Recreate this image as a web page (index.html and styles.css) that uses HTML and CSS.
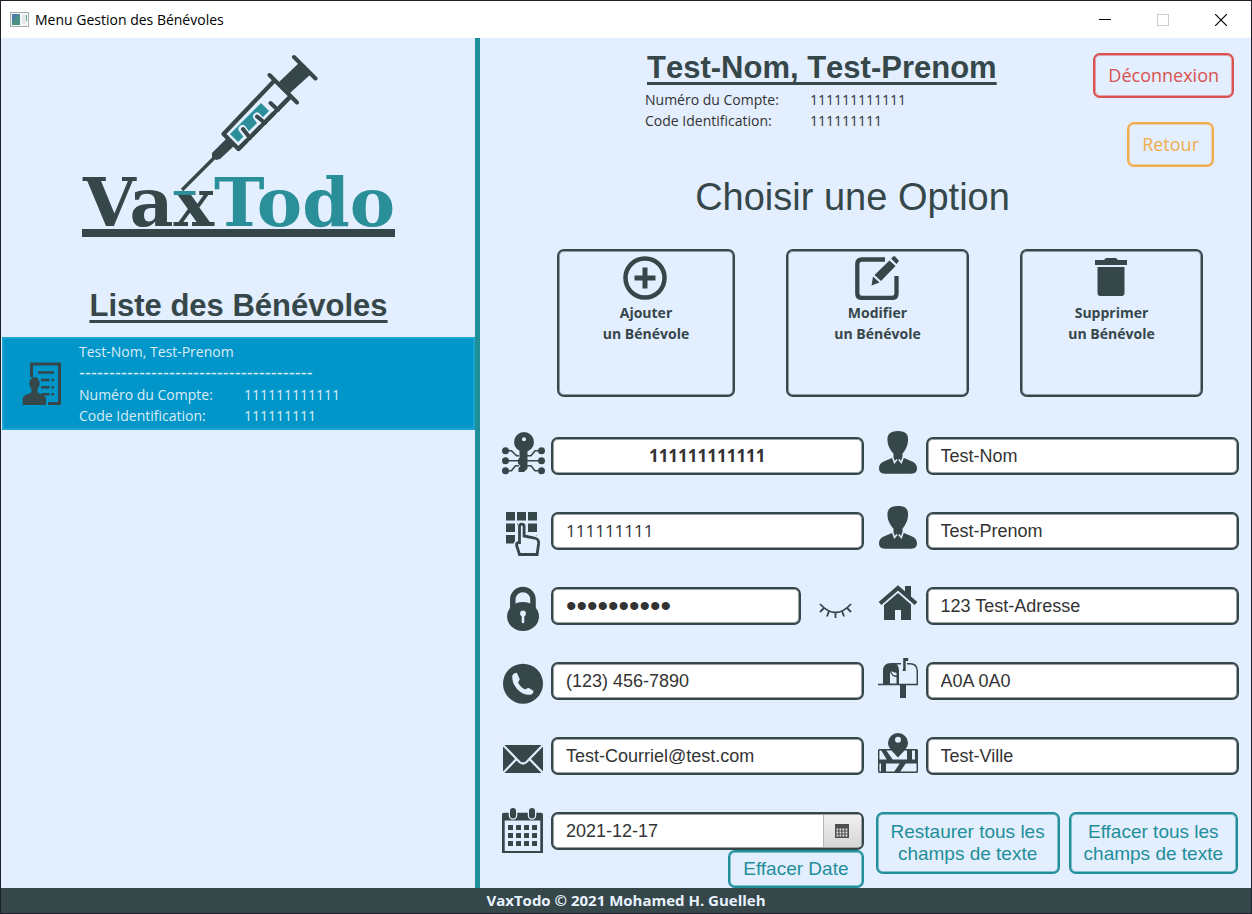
FILE: index.html
```html
<!DOCTYPE html>
<html lang="fr">
<head>
<meta charset="utf-8">
<title>Menu Gestion des Bénévoles</title>
<link rel="stylesheet" href="styles.css">
</head>
<body>
<div class="window">
  <header class="titlebar">
    <svg class="app-icon" width="19" height="16" viewBox="0 0 19 16"><rect x="0.5" y="0.5" width="18" height="14" fill="#f4f6f8" stroke="#a9adb0"/><rect x="2" y="2" width="8" height="11" fill="#4d9186"/><path d="M2 2h7L2 10z" fill="#4c7ba8"/><rect x="12" y="3" width="4" height="9" fill="#e4e8ec"/><rect x="16" y="3" width="1" height="6" fill="#5fae86"/></svg>
    <span class="window-title">Menu Gestion des Bénévoles</span>
    <div class="window-controls">
      <button type="button" aria-label="Réduire"><svg width="12" height="12" viewBox="0 0 12 12"><path d="M0 5.5h12" stroke="#000"/></svg></button>
      <button type="button" aria-label="Agrandir" disabled><svg width="12" height="12" viewBox="0 0 12 12"><rect x="0.5" y="0.5" width="11" height="11" fill="none" stroke="#ccc"/></svg></button>
      <button type="button" aria-label="Fermer"><svg width="12" height="12" viewBox="0 0 12 12"><path d="M0 0l12 12M12 0L0 12" stroke="#000" stroke-width="1.2"/></svg></button>
    </div>
  </header>

  <div class="content">
    <aside class="sidebar">
      <svg class="logo" width="313" height="194" viewBox="82 50 313 194" role="img" aria-label="VaxTodo">
        <text class="logo-text" x="83" y="226"><tspan fill="#36474a">Vax</tspan><tspan x="214" fill="#2b8f99">Todo</tspan></text>
        <rect x="174" y="191" width="21" height="4" fill="#2b8f99"/>
        <rect x="82" y="229" width="313" height="8" fill="#36474a"/>
        <path d="M216 156L182 190" stroke="#36474a" stroke-width="3.4"/>
        <path d="M226 139l8 7-14 13-4 1-4-3v-4z" fill="#36474a"/>
        <path d="M274 81L223.500 134l15 15L290 97" fill="none" stroke="#36474a" stroke-width="4.200" stroke-linejoin="round"/>
        <path d="M230 134l31-31 8 8-31 31z" fill="#2b8f99"/>
        <path d="M276 110l-5-6M263 124l-6-7.500M249 138l-6.500-9" stroke="#e3eeff" stroke-width="8" stroke-linecap="round"/>
        <path d="M278 110l-7.500-7M265 123l-8-6.500M250 138l-7-9" stroke="#36474a" stroke-width="4" stroke-linecap="round"/>
        <path d="M238.500 149L290 97M269.500 75L297 102.500M294 57l21.500 21.500" stroke="#36474a" stroke-width="4" stroke-linecap="round"/>
        <path d="M300 62l11 12-21 19-11-11z" fill="#36474a"/>
      </svg>
      <h2 class="list-title">Liste des Bénévoles</h2>
      <ul class="list">
        <li class="list-item">
          <svg class="ink" width="40" height="44" viewBox="0 0 40 44"><path d="M9.500 15V2h28v39.500H26" fill="none" stroke="#36474a" stroke-width="3"/><path d="M16 10.500h16M19 18h8.500M29.500 18h2.500M19 25.300h8.500M29.500 25.300h2.500M20 32.300h7.500M29.500 32.300h2.500" stroke="#36474a" stroke-width="2.500"/><ellipse cx="12.500" cy="21.500" rx="5.200" ry="6.500"/><path d="M9.500 25h6v5c3 3 8.500 2 8.500 7.500V43H.700v-5.500C.700 32 6.500 33 9.500 30z"/></svg>
          <div>
            <p>Test-Nom, Test-Prenom</p>
            <p class="dashes">---------------------------------------</p>
            <dl class="ids"><dt>Numéro du Compte:</dt><dd>111111111111</dd><dt>Code Identification:</dt><dd>111111111</dd></dl>
          </div>
        </li>
      </ul>
    </aside>

    <main class="main">
      <div class="top">
        <div class="user">
          <h1>Test-Nom, Test-Prenom</h1>
          <dl class="ids"><dt>Numéro du Compte:</dt><dd>111111111111</dd><dt>Code Identification:</dt><dd>111111111</dd></dl>
        </div>
        <div class="session">
          <button type="button" class="btn btn-danger">Déconnexion</button>
          <button type="button" class="btn btn-warning">Retour</button>
        </div>
      </div>

      <h2 class="prompt">Choisir une Option</h2>

      <div class="cards">
        <button type="button" class="card">
          <svg class="ink" width="46" height="46" viewBox="0 0 46 46"><circle cx="22" cy="24" r="19.500" fill="none" stroke="#36474a" stroke-width="4.500"/><path d="M19.500 13.500h5v8h8v5h-8v8h-5v-8h-8v-5h8z"/></svg>
          <span>Ajouter<br>un Bénévole</span>
        </button>
        <button type="button" class="card">
          <svg class="ink" width="46" height="46" viewBox="0 0 46 46"><path d="M30 5.500H7Q2.300 5.500 2.300 10v29.500Q2.300 44 7 44h30q4.500 0 4.500-4.500V22" fill="none" stroke="#36474a" stroke-width="4.300"/><path d="M36 4.500l3-2.500q1 0 5 5l-2.500 3z"/><path d="M34.500 6.500l6 5.500L26 27l-6.500-6z"/><path d="M18 22.500l6.500 6-8 3z"/></svg>
          <span>Modifier<br>un Bénévole</span>
        </button>
        <button type="button" class="card">
          <svg class="ink" width="46" height="46" viewBox="0 0 46 46"><path d="M6 6h9l2-2h10l2 2h9v5H6zM8.500 13h27v26q0 3-3 3h-21q-3 0-3-3z"/></svg>
          <span>Supprimer<br>un Bénévole</span>
        </button>
      </div>

      <form class="form">
        <div class="column">
          <div class="row">
            <label for="account" aria-label="Numéro du compte"><svg class="ink" width="43" height="50" viewBox="0 0 43 50"><g fill="none" stroke="#36474a" stroke-width="1.600"><path d="M3 19.700h6.500l5 5H17M3 29.700h14M3 39.700h6.500l4-5H17M39.500 19.700H33l-4 5h-4M39.500 29.700H25M39.500 39.700H33l-4-5h-4"/></g><circle cx="3.500" cy="19.700" r="3.500"/><circle cx="3.500" cy="29.700" r="3.500"/><circle cx="3.500" cy="39.700" r="3.500"/><circle cx="39.500" cy="19.700" r="3.500"/><circle cx="39.500" cy="29.700" r="3.500"/><circle cx="39.500" cy="39.700" r="3.500"/><path d="M17.500 19h8v18.500L22 41h-5.500v-4l2-2-2.500-2.500v-4l1.500-1.500z"/><circle cx="22" cy="11" r="10"/><circle cx="22" cy="8.300" r="2" fill="#e3eeff"/></svg></label>
            <input id="account" class="field digits strong" type="text" value="111111111111">
          </div>
          <div class="row">
            <label for="code" aria-label="Code identification"><svg class="ink" width="43" height="50" viewBox="0 0 43 50"><path d="M4 6h9v8.500H4zM15 6h9v8.500h-9zM26 6h9v8.500h-9zM4 17.500h9V26H4zM15 17.500h9V26h-9zM26 17.500h9V26h-9zM4 29h9v8.500H4zM26 29h9v5h-9z"/><path d="M17 36V20.500a3 3 0 0 1 6 0V29l10 2q4.500 1.500 4 6l-1.500 11.500H17L13.500 39q0-3 3.500-3z" fill="#e3eeff" stroke="#e3eeff" stroke-width="4"/><path d="M17.500 38V20.500a2.300 2.300 0 0 1 4.600 0V30l10.500 2q4.500 1 4 5.500l-1.500 11H17.500L14.500 39q0-2.500 3-2.500" fill="#e3eeff" stroke="#36474a" stroke-width="2.800"/></svg></label>
            <input id="code" class="field digits" type="text" value="111111111">
          </div>
          <div class="row">
            <label for="password" aria-label="Mot de passe"><svg class="ink" width="43" height="50" viewBox="0 0 43 50"><path d="M10.800 30V18.500a10 10 0 0 1 20.200 0V30" fill="none" stroke="#36474a" stroke-width="5.500"/><ellipse cx="21" cy="35.500" rx="16" ry="14.500"/><circle cx="21" cy="32.500" r="2.900" fill="#e3eeff"/><path d="M21 33v8" stroke="#e3eeff" stroke-width="2.600" stroke-linecap="round"/></svg></label>
            <input id="password" class="field password" type="password" value="motdepasse">
            <button type="button" class="reveal" aria-label="Afficher le mot de passe"><svg width="34" height="24" viewBox="0 0 34 24"><path d="M1 10Q16.500 27 32 10M5 14l-4 4M10 17l-2 5.500M16.500 18.500V24M23 17l2 5.500M28 14l4 4" fill="none" stroke="#36474a" stroke-width="1.800"/></svg></button>
          </div>
          <div class="row">
            <label for="phone" aria-label="Téléphone"><svg class="ink" width="43" height="50" viewBox="0 0 43 50"><circle cx="21" cy="27.700" r="20"/><path d="M10.300 19.500q1-2.500 4.500-2.800l3 6.500-1.700 3.300q2.500 5 7 7l3.300-1.800 5 3q.5 2.500-2 3.800Q22 40 15.500 33.500 9.500 26.500 10.300 19.500z" fill="#e3eeff"/></svg></label>
            <input id="phone" class="field" type="text" value="(123) 456-7890">
          </div>
          <div class="row">
            <label for="email" aria-label="Courriel"><svg class="ink" width="43" height="50" viewBox="0 0 43 50"><path d="M1 14h40v28H1z"/><path d="M0 13l17.500 18q3.500 3 7 0L42 13M0 43l14.500-15M42 43L27.500 28" fill="none" stroke="#e3eeff" stroke-width="2.200"/></svg></label>
            <input id="email" class="field" type="text" value="Test-Courriel@test.com">
          </div>
          <div class="row row-date">
            <label for="date" aria-label="Date"><svg class="ink" width="43" height="50" viewBox="0 0 43 50"><path d="M2 6.700h37q2 0 2 2V47H0V8.700q0-2 2-2zM2.700 14.500V45h35.600V14.500z" fill-rule="evenodd"/><path d="M11 5v4.500M30 5v4.500" stroke="#e3eeff" stroke-width="8.500" stroke-linecap="round"/><path d="M11 5v4.500M30 5v4.500" stroke="#36474a" stroke-width="6" stroke-linecap="round"/><path d="M6 19h5v5H6zM14 19h5v5h-5zM22 19h5v5h-5zM30 19h5v5h-5zM6 27h5v5H6zM14 27h5v5h-5zM22 27h5v5h-5zM30 27h5v5h-5zM6 35h5v5H6zM14 35h5v5h-5zM22 35h5v5h-5zM30 35h5v5h-5z"/></svg></label>
            <div class="date">
              <div class="datepicker">
                <input id="date" type="text" value="2021-12-17">
                <button type="button" aria-label="Ouvrir le calendrier"><svg width="14" height="14" viewBox="0 0 14 14"><path d="M0 0h14v14H0z" fill="#4e4e4e"/><path d="M1.500 5.500h12M1.500 8.500h12M1.500 11.500h12" stroke="#e4e4e4" stroke-width="1.800" stroke-dasharray="1.800 1.200"/></svg></button>
              </div>
              <button type="button" class="btn btn-action btn-clear-date">Effacer Date</button>
            </div>
          </div>
        </div>

        <div class="column column-right">
          <div class="row">
            <label for="lastname" aria-label="Nom"><svg class="ink" width="40" height="50" viewBox="0 0 40 50"><path d="M20 0c8 0 10.500 3.500 10 9.500-.4 6-3 10.500-5.500 13V26c5 3.500 14.500 4 14.500 11 0 4-2 5.700-6 5.700H7c-4 0-6-1.700-6-5.700 0-7 9.500-7.500 14.500-11v-3.500C13 20 9.700 15.500 9.500 9.500 9 3.500 12 0 20 0z"/><path d="M14.500 26l2 5.500 2.500-3M25.300 26l-2 5.500-2.500-3" fill="none" stroke="#e3eeff" stroke-width="1.600"/></svg></label>
            <input id="lastname" class="field" type="text" value="Test-Nom">
          </div>
          <div class="row">
            <label for="firstname" aria-label="Prénom"><svg class="ink" width="40" height="50" viewBox="0 0 40 50"><path d="M20 0c8 0 10.500 3.500 10 9.500-.4 6-3 10.500-5.500 13V26c5 3.500 14.500 4 14.500 11 0 4-2 5.700-6 5.700H7c-4 0-6-1.700-6-5.700 0-7 9.500-7.500 14.500-11v-3.500C13 20 9.700 15.500 9.500 9.500 9 3.500 12 0 20 0z"/><path d="M14.500 26l2 5.500 2.500-3M25.300 26l-2 5.500-2.500-3" fill="none" stroke="#e3eeff" stroke-width="1.600"/></svg></label>
            <input id="firstname" class="field" type="text" value="Test-Prenom">
          </div>
          <div class="row">
            <label for="address" aria-label="Adresse"><svg class="ink" width="40" height="50" viewBox="0 0 40 50"><path d="M27 5h6v12l-6-5z"/><path d="M2 22.500L20 7l18 15.500" fill="none" stroke="#36474a" stroke-width="4.200"/><path d="M20 12L6 24v15h11V29h6v10h10V23.500z"/></svg></label>
            <input id="address" class="field" type="text" value="123 Test-Adresse">
          </div>
          <div class="row">
            <label for="postal" aria-label="Code postal"><svg class="ink" width="40" height="50" viewBox="0 0 40 50"><path d="M0 28.500h40" stroke="#36474a" stroke-width="1.300"/><path d="M22 28h6v14h-6z"/><path d="M5 28.500V15q0-8 8-8h4q4 2 4 8v13.500z"/><path d="M12 27.500V15l6.500 2v10.500z" fill="#e3eeff"/><path d="M12 15l3 4.500 4 1" fill="none" stroke="#36474a" stroke-width="1.300"/><path d="M13 7.700h10M29 7.700h3q7.300 0 7.300 8v12.500" fill="none" stroke="#36474a" stroke-width="1.500"/><path d="M25.200 2h5v3h-2.500v10h-3v-2h.5z"/></svg></label>
            <input id="postal" class="field" type="text" value="A0A 0A0">
          </div>
          <div class="row">
            <label for="city" aria-label="Ville"><svg class="ink" width="40" height="50" viewBox="0 0 40 50"><rect x="0.700" y="18.700" width="38.600" height="22.600" rx="1" fill="none" stroke="#36474a" stroke-width="1.500"/><path d="M0 28.500h40v4H0zM3 19h5l7 10H9zM29 19h5v10h-5zM37 19h2v10h-2zM3 32h5v9H3zM22 32h6l-6 9h-6z"/><path d="M20 2a10 10 0 0 1 10 10c0 5-5 9-10 14.500C15 21 10 17 10 12A10 10 0 0 1 20 2z"/><circle cx="20" cy="8.700" r="3" fill="#e3eeff"/></svg></label>
            <input id="city" class="field" type="text" value="Test-Ville">
          </div>
          <div class="actions">
            <button type="button" class="btn btn-action">Restaurer tous les<br>champs de texte</button>
            <button type="button" class="btn btn-action">Effacer tous les<br>champs de texte</button>
          </div>
        </div>
      </form>
    </main>
  </div>

  <footer class="footer">VaxTodo © 2021 Mohamed H. Guelleh</footer>
</div>
</body>
</html>
```
FILE: styles.css
```css
:root {
  --ink: #36474a;
  --ink-soft: #9aa3a4;
  --sky: #e3eeff;
  --teal: #1f8f99;
  --ui: "Open Sans", "Noto Sans", sans-serif;
  --sans: "Liberation Sans", Arial, sans-serif;
}

* { box-sizing: border-box; }

body, h1, h2, p, ul, dl, dd { margin: 0; padding: 0; }

body {
  font: 14px/21px var(--ui);
  color: #333;
}

button, input { font: inherit; color: inherit; }
button { padding: 0; background: none; border: 0; }
svg { display: block; flex: none; }

.ink { fill: var(--ink); }

.window {
  display: flex;
  flex-direction: column;
  min-height: 100vh;
  border: 1px solid #1b202b;
  background: var(--sky);
}

.titlebar {
  display: flex;
  align-items: center;
  gap: 6px;
  height: 37px;
  padding: 0 1px 0 9px;
  background: #fff;
  color: #000;
}

.window-controls { display: flex; margin-left: auto; }
.window-controls button {
  display: grid;
  place-items: center;
  width: 58px;
  height: 36px;
}

.content { display: flex; flex: 1; }

.sidebar {
  flex: 0 0 479px;
  padding: 12px 0 0 1px;
  border-right: 5px solid var(--teal);
}

.logo { margin: 0 auto; }
.logo-text { font: bold 68px "DejaVu Serif", serif; }

.list-title, .user h1 {
  font: bold 31px/36px var(--sans);
  font-kerning: none;
  color: var(--ink);
  text-decoration: underline;
  text-decoration-thickness: 3px;
  text-decoration-skip-ink: none;
  text-underline-offset: 4px;
}

.list-title { margin: 44px 0 13px; text-align: center; }

.list { list-style: none; }

.list-item {
  display: flex;
  align-items: center;
  gap: 17px;
  padding: 2px 18px;
  border: 2px solid #1ba3d2;
  background: #0096c9;
  color: #dcecf7;
}

.dashes { font: 18px/22px var(--sans); }

.ids { display: grid; grid-template-columns: 165px auto; }

.main { flex: 1; min-width: 0; }

.top {
  display: flex;
  justify-content: space-between;
  padding: 12px 17px 0 165px;
}

.user h1 { padding-left: 2px; }
.user .ids { margin-top: 3px; }

.session {
  display: flex;
  flex-direction: column;
  align-items: flex-end;
  gap: 24px;
  padding-top: 3px;
}

.btn {
  border: 2px solid;
  border-radius: 7px;
  font-size: 18px;
  line-height: 22px;
  white-space: nowrap;
}

.btn-danger, .btn-warning { height: 45px; padding: 0 13px 2px; }
.btn-danger { color: #d9534f; box-shadow: inset 0 0 0 1px #dfa2ab; }
.btn-warning { margin-right: 20px; color: #f0ad4e; box-shadow: inset 0 0 0 1px #eacea8; }

.btn-action {
  font: 19px/22px var(--sans);
  color: var(--teal);
  border-color: var(--teal);
  box-shadow: inset 0 0 0 1px #82bfcc;
}

.prompt {
  margin: 8px 26px 30px 0;
  font: 38px/44px var(--sans);
  color: var(--ink);
  text-align: center;
}

.cards {
  display: grid;
  grid-template-columns: 178fr 183fr 183fr;
  gap: 51px;
  padding: 0 48px 0 77px;
}

.card {
  display: flex;
  flex-direction: column;
  align-items: center;
  min-height: 148px;
  padding-top: 3px;
  border: 2px solid var(--ink);
  border-radius: 7px;
  box-shadow: inset 0 0 0 1px #8d9ba5;
  color: var(--ink);
  font-weight: bold;
}
.card svg { margin-bottom: 2px; }

.form {
  display: grid;
  grid-template-columns: repeat(2, minmax(0, 1fr));
  gap: 14px;
  padding: 34px 12px 0 22px;
}

.column {
  display: grid;
  grid-template-columns: minmax(0, 1fr);
  gap: 25px;
  align-content: start;
}

.row { display: flex; align-items: center; gap: 6px; height: 50px; }
.column-right .row { gap: 8px; }

.field, .datepicker {
  flex: 1;
  min-width: 0;
  height: 38px;
  border: 2px solid var(--ink);
  border-radius: 7px;
  box-shadow: inset 0 0 0 1px var(--ink-soft);
  background: #fff;
}

.field, .datepicker input {
  padding: 0 13px;
  font: 18px/22px var(--sans);
  color: #333;
}

.digits { padding-bottom: 2px; font: 17px/22px var(--ui); }
.strong { font-weight: bold; text-align: center; }
.password { font-size: 30px; }
.reveal { padding: 0 11px 0 12px; }

.row-date { align-items: flex-start; height: auto; }
.date {
  display: flex;
  flex: 1;
  flex-direction: column;
  align-items: flex-end;
  padding-top: 6px;
}
.datepicker {
  display: flex;
  flex: none;
  width: 100%;
  overflow: hidden;
}
.datepicker input { flex: 1; min-width: 0; border: 0; background: none; }
.datepicker button {
  display: grid;
  place-items: center;
  width: 38px;
  margin: 1px 1px 1px 0;
  border-left: 1px solid #b5b5b5;
  background: linear-gradient(#f0f0f0, #d6d6d6);
}
.btn-clear-date { height: 38px; padding: 0 13px; }

.actions {
  display: flex;
  justify-content: space-between;
  gap: 8px;
  margin: 6px 1px 0 -2px;
}
.actions .btn { height: 62px; padding: 0 13px; }

.footer {
  height: 25px;
  background: var(--ink);
  color: #e8f2ff;
  font-size: 15px;
  font-weight: bold;
  line-height: 24px;
  text-align: center;
}
```
